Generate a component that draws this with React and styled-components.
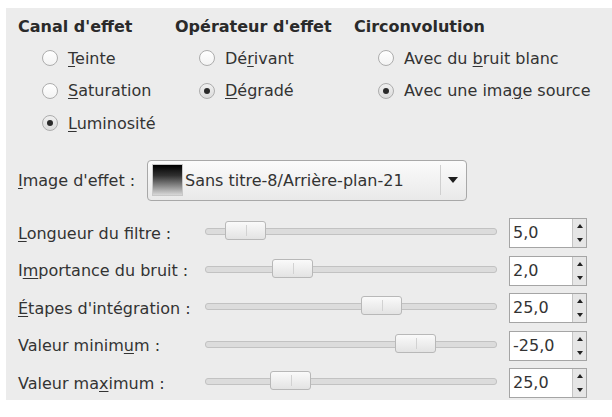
import { Fragment } from 'react'
import styled, { createGlobalStyle } from 'styled-components'

const Global = createGlobalStyle`
  html, body {
    margin: 0;
    padding: 0;
    background: #ffffff;
  }
  body {
    font-family: "DejaVu Sans", "Liberation Sans", sans-serif;
    font-size: 16px;
    color: #333333;
  }
`

const Panel = styled.div`
  margin: 8px 0 0 6px;
  height: 392px;
  background: #ececec;
  padding: 9px 0 0 12px;
  box-sizing: border-box;
`

const Groups = styled.div`
  display: grid;
  grid-template-columns: 157px 179px 1fr;
`

const Group = styled.div`
  display: flex;
  flex-direction: column;
`

const Heading = styled.div`
  font-weight: bold;
  line-height: 19px;
  margin-bottom: 6px;
  white-space: nowrap;
  color: #2a2a2a;
`

const RadioRow = styled.div`
  display: flex;
  align-items: center;
  height: 32.5px;
  padding-left: 24px;
  gap: 10px;
  white-space: nowrap;
`

const Circle = styled.span`
  width: 16px;
  height: 16px;
  box-sizing: border-box;
  border-radius: 50%;
  border: 1px solid #adadad;
  background: ${p => (p.checked ? 'linear-gradient(#f0f0f0, #dcdcdc)' : 'linear-gradient(#ffffff, #f3f3f3)')};
  display: flex;
  align-items: center;
  justify-content: center;
  &::after {
    content: '';
    width: 6px;
    height: 6px;
    border-radius: 50%;
    background: #2a2a2a;
    display: ${p => (p.checked ? 'block' : 'none')};
  }
`

const Key = styled.span`
  text-decoration: underline;
  text-underline-offset: 2px;
`

const ComboRow = styled.div`
  display: flex;
  align-items: center;
  margin-top: 20px;
`

const Label = styled.div`
  width: ${p => p.width || 187}px;
  flex: none;
  white-space: nowrap;
`

const Combo = styled.div`
  width: 320px;
  height: 41px;
  box-sizing: border-box;
  border: 1px solid #a8a8a8;
  border-radius: 4px;
  background: linear-gradient(#fbfbfb, #e9e9e9);
  display: flex;
  align-items: center;
  padding-left: 4px;
`

const Swatch = styled.span`
  width: 31px;
  height: 32px;
  flex: none;
  background: linear-gradient(#000000 0%, #303030 35%, #d8d8d8 100%);
  border: 1px solid #c8c8c8;
  box-sizing: border-box;
`

const ComboText = styled.span`
  flex: 1;
  padding-left: 2px;
  white-space: nowrap;
`

const ComboArrow = styled.span`
  width: 24px;
  height: 30px;
  border-left: 1px solid #cfcfcf;
  display: flex;
  align-items: center;
  justify-content: center;
  margin-right: 1px;
  &::after {
    content: '';
    border-left: 5px solid transparent;
    border-right: 5px solid transparent;
    border-top: 6px solid #1e1e1e;
  }
`

const Sliders = styled.div`
  display: grid;
  grid-template-columns: 187px 292px 90px;
  grid-auto-rows: 37.5px;
  align-items: center;
  margin-top: 14px;
`

const Track = styled.div`
  position: relative;
  height: 5px;
  border: 1px solid #c2c2c2;
  border-radius: 3px;
  background: #dcdcdc;
  margin-top: -3px;
`

const Handle = styled.span`
  position: absolute;
  top: -8px;
  width: 41px;
  height: 19px;
  box-sizing: border-box;
  border: 1px solid #b8b8b8;
  border-radius: 3px;
  background: linear-gradient(#fafafa, #e3e3e3);
  &::after {
    content: '';
    position: absolute;
    left: 50%;
    top: 3px;
    bottom: 3px;
    width: 1px;
    background: #d2d2d2;
  }
`

const Spin = styled.div`
  display: flex;
  height: 30px;
  margin-left: 12px;
  box-sizing: border-box;
  border: 1px solid #a5a5a5;
  background: #ffffff;
`

const SpinEntry = styled.div`
  flex: 1;
  padding-left: 3px;
  line-height: 28px;
`

const SpinButtons = styled.div`
  width: 13px;
  border-left: 1px solid #c4c4c4;
  background: #e6e6e6;
  display: flex;
  flex-direction: column;
`

const SpinArrow = styled.span`
  flex: 1;
  display: flex;
  align-items: center;
  justify-content: center;
  &::after {
    content: '';
    border-left: 3.5px solid transparent;
    border-right: 3.5px solid transparent;
    ${p => (p.up ? 'border-bottom: 4px solid #222;' : 'border-top: 4px solid #222;')}
  }
`

const groups = [
  {
    title: "Canal d'effet",
    items: [
      { pre: '', key: 'T', post: 'einte' },
      { pre: '', key: 'S', post: 'aturation' },
      { pre: '', key: 'L', post: 'uminosité', checked: true },
    ],
  },
  {
    title: "Opérateur d'effet",
    items: [
      { pre: 'Dé', key: 'r', post: 'ivant' },
      { pre: '', key: 'D', post: 'égradé', checked: true },
    ],
  },
  {
    title: 'Circonvolution',
    items: [
      { pre: 'Avec du ', key: 'b', post: 'ruit blanc' },
      { pre: 'Avec une ima', key: 'g', post: 'e source', checked: true },
    ],
  },
]

const sliders = [
  { pre: '', key: 'L', post: 'ongueur du filtre :', pos: 19, value: '5,0' },
  { pre: 'I', key: 'm', post: 'portance du bruit :', pos: 66, value: '2,0' },
  { pre: '', key: 'É', post: "tapes d'intégration :", pos: 155, value: '25,0' },
  { pre: 'Valeur minim', key: 'u', post: 'm :', pos: 189, value: '-25,0' },
  { pre: 'Valeur ma', key: 'x', post: 'imum :', pos: 64, value: '25,0' },
]

function Mnemonic({ pre, k, post }) {
  return (
    <span>
      {pre}
      <Key>{k}</Key>
      {post}
    </span>
  )
}

export default function App() {
  return (
    <>
      <Global />
      <Panel>
        <Groups>
          {groups.map(g => (
            <Group key={g.title}>
              <Heading>{g.title}</Heading>
              {g.items.map(it => (
                <RadioRow key={it.post}>
                  <Circle checked={it.checked} />
                  <Mnemonic pre={it.pre} k={it.key} post={it.post} />
                </RadioRow>
              ))}
            </Group>
          ))}
        </Groups>

        <ComboRow>
          <Label width={129}>
            <Mnemonic pre='' k='I' post="mage d'effet :" />
          </Label>
          <Combo>
            <Swatch />
            <ComboText>Sans titre-8/Arrière-plan-21</ComboText>
            <ComboArrow />
          </Combo>
        </ComboRow>

        <Sliders>
          {sliders.map(s => (
            <Fragment key={s.post}>
              <Label>
                <Mnemonic pre={s.pre} k={s.key} post={s.post} />
              </Label>
              <Track>
                <Handle style={{ left: s.pos }} />
              </Track>
              <Spin>
                <SpinEntry>{s.value}</SpinEntry>
                <SpinButtons>
                  <SpinArrow up />
                  <SpinArrow />
                </SpinButtons>
              </Spin>
            </Fragment>
          ))}
        </Sliders>
      </Panel>
    </>
  )
}
